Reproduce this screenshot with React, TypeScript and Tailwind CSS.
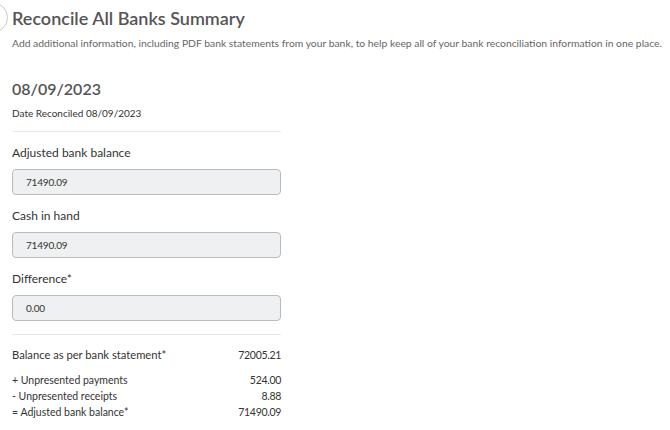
import React from "react";

const rows = [
  { label: "+ Unpresented payments", value: "524.00" },
  { label: "- Unpresented receipts", value: "8.88" },
  { label: "= Adjusted bank balance*", value: "71490.09" },
];

function ReadOnlyField({ label, value }: { label: string; value: string }) {
  return (
    <div className="flex flex-col">
      <label className="text-[12px] text-[#333] leading-[14px]">{label}</label>
      <div className="mt-[9px] h-[26px] rounded-[4px] border border-[#b9bcbe] bg-[#eef0f1] px-[13px] flex items-center text-[10px] tracking-[-0.2px] text-[#333]">
        {value}
      </div>
    </div>
  );
}

export default function App() {
  return (
    <div
      className="relative w-[670px] h-[430px] overflow-hidden bg-white px-[12px] pt-[6px]"
      style={{ fontFamily: "Lato, 'Liberation Sans', sans-serif" }}
    >
      <div className="absolute left-[-23px] top-[2px] w-[31px] h-[31px] rounded-full border border-[#c9cbcd]" />

      <h1 className="text-[18px] font-semibold text-[#555] leading-[24px]">
        Reconcile All Banks Summary
      </h1>
      <p className="mt-[6px] text-[10.35px] text-[#666] leading-[14px] whitespace-nowrap">
        Add additional information, including PDF bank statements from your bank, to help keep all of your bank reconciliation information in one place.
      </p>

      <div className="w-[269px]">
        <h2 className="mt-[27px] text-[16px] font-semibold text-[#555] leading-[24px]">08/09/2023</h2>
        <p className="mt-[5px] text-[10px] text-[#333] leading-[14px]">Date Reconciled 08/09/2023</p>

        <div className="mt-[11px] border-t border-[#e6e7e8]" />

        <div className="mt-[14px] flex flex-col gap-[14px]">
          <ReadOnlyField label="Adjusted bank balance" value="71490.09" />
          <ReadOnlyField label="Cash in hand" value="71490.09" />
          <ReadOnlyField label="Difference*" value="0.00" />
        </div>

        <div className="mt-[13px] border-t border-[#e6e7e8]" />

        <div className="mt-[12px] flex justify-between text-[11.2px] text-[#333] leading-[16px]">
          <span>Balance as per bank statement*</span>
          <span className="text-[10.5px] tracking-[-0.3px]">72005.21</span>
        </div>
        <div className="mt-[9px] flex flex-col text-[10.5px] text-[#333] leading-[16px]">
          {rows.map((r) => (
            <div key={r.label} className="flex justify-between">
              <span>{r.label}</span>
              <span className="tracking-[-0.3px]">{r.value}</span>
            </div>
          ))}
        </div>
      </div>
    </div>
  );
}
